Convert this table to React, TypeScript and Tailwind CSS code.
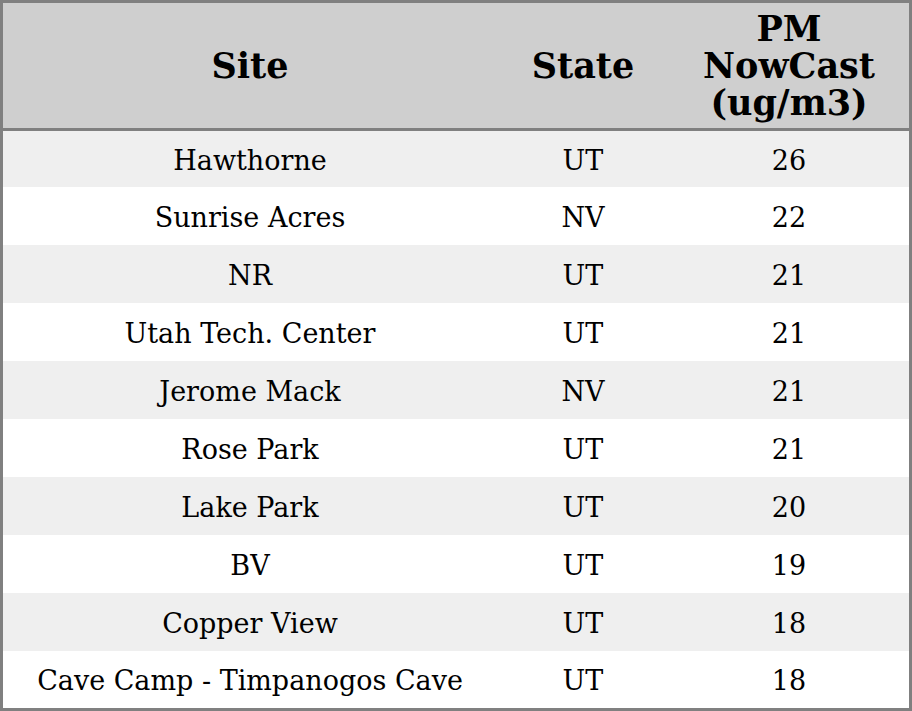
const rows: [string, string, number][] = [
  ['Hawthorne', 'UT', 26],
  ['Sunrise Acres', 'NV', 22],
  ['NR', 'UT', 21],
  ['Utah Tech. Center', 'UT', 21],
  ['Jerome Mack', 'NV', 21],
  ['Rose Park', 'UT', 21],
  ['Lake Park', 'UT', 20],
  ['BV', 'UT', 19],
  ['Copper View', 'UT', 18],
  ['Cave Camp - Timpanogos Cave', 'UT', 18],
]

export default function App() {
  return (
    <div className="w-[912px] h-[711px] bg-white text-black font-['DejaVu_Serif',serif]">
      <div className="flex flex-col h-full border-[3px] border-[#808080]">
        <div className="flex h-[125px] shrink-0 bg-[#cfcfcf] text-[35px] font-bold leading-[37px] text-center border-b-[3px] border-[#808080] box-content">
          <div className="w-[494px] flex items-center justify-center">Site</div>
          <div className="w-[172px] flex items-center justify-center">State</div>
          <div className="w-[240px] flex items-center justify-center">
            PM
            <br />
            NowCast
            <br />
            (ug/m3)
          </div>
        </div>
        <div className="flex flex-col flex-1 text-[27px]">
          {rows.map(([site, state, pm], i) => (
            <div
              key={i}
              className={`flex items-center text-center pt-[4px] ${i === 0 ? 'h-[56px]' : i === rows.length - 1 ? 'flex-1' : 'h-[58px]'} ${i % 2 === 0 ? 'bg-[#efefef]' : 'bg-white'}`}
            >
              <div className="w-[494px] whitespace-nowrap">{site}</div>
              <div className="w-[172px]">{state}</div>
              <div className="w-[240px]">{pm}</div>
            </div>
          ))}
        </div>
      </div>
    </div>
  )
}
